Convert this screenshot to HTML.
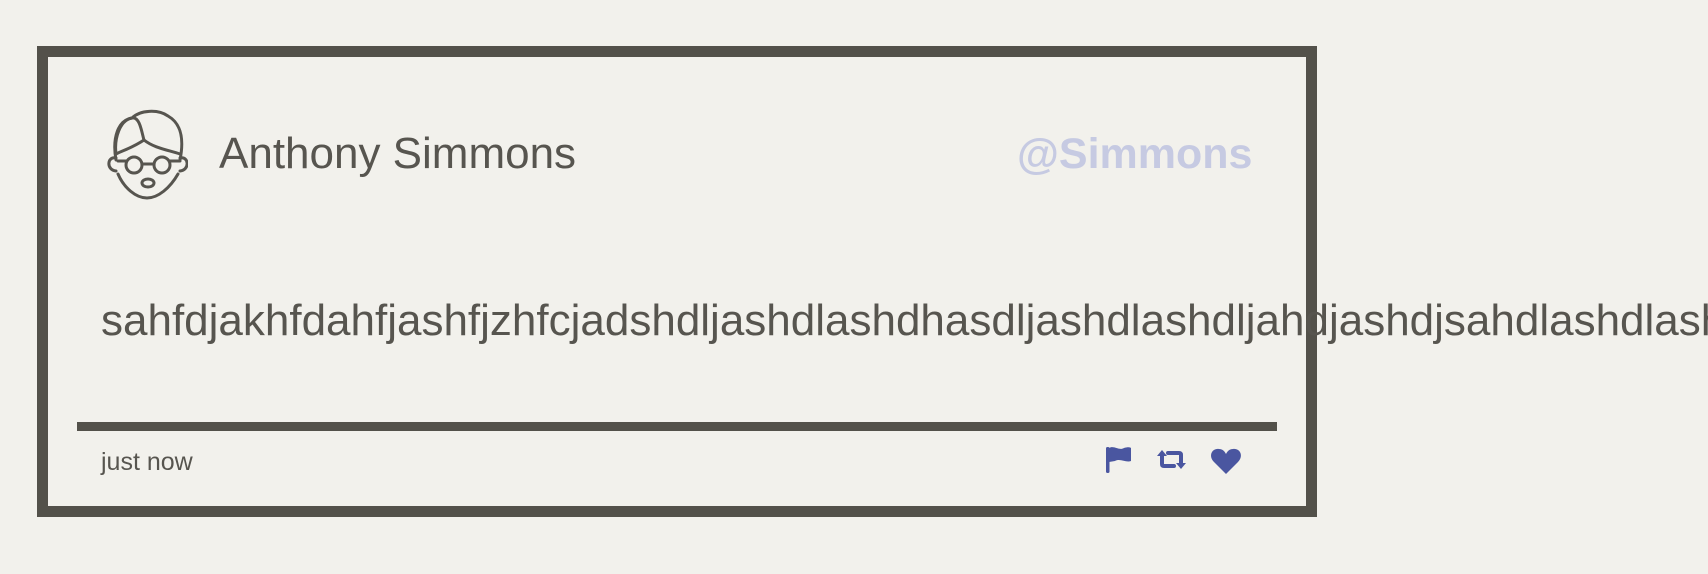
<!DOCTYPE html>
<html><head><style>
html,body{margin:0;padding:0;width:1708px;height:574px;overflow:hidden;background:#f2f1ec;font-family:"Liberation Sans",sans-serif;color:#57554f}
.box{position:absolute;left:37px;top:46px;width:1258px;height:449px;border:11px solid #53514a}
.abs{position:absolute;white-space:nowrap}
</style></head><body>
<div class="box"></div>
<svg class="abs" style="left:104px;top:108px" width="84" height="94" viewBox="0 0 84 94" fill="none" stroke="#57554f" stroke-width="3" stroke-linecap="round" stroke-linejoin="round">
<path d="M12 52 C8 30 14 12 28 10 C36 2 54 1 64 8 C78 16 80 32 76 52"/>
<path d="M28 10 C36 8 38 26 40 32 C50 40 64 42 76 46"/>
<path d="M28 10 C16 12 10 30 12 46"/>
<path d="M12 46 C20 42 28 40 40 32"/>
<path d="M12 50 C3 48 2 62 12 63"/>
<path d="M76 50 C85 48 86 62 76 63"/>
<circle cx="30" cy="57" r="8"/><circle cx="58" cy="57" r="8"/>
<path d="M38 56 L50 56 M14 53 L22 53 M66 53 L76 53"/>
<path d="M14 66 C20 80 32 90 43 90 C54 90 66 80 74 66"/>
<ellipse cx="44" cy="75" rx="6" ry="4"/>
</svg>
<div class="abs" style="left:219px;top:126px;font-size:44px;line-height:56px">Anthony Simmons</div>
<div class="abs" style="left:1017px;top:126px;font-size:43px;line-height:56px;font-weight:bold;color:#c6cae2">@Simmons</div>
<div class="abs" style="left:101px;top:293px;font-size:44px;line-height:56px">sahfdjakhfdahfjashfjzhfcjadshdljashdlashdhasdljashdlashdljahdjashdjsahdlashdlashd</div>
<div class="abs" style="left:77px;top:422px;width:1200px;height:9px;background:#53514a"></div>
<div class="abs" style="left:101px;top:447px;font-size:25px;line-height:30px">just now</div>
<svg class="abs" style="left:1104px;top:444px" width="140" height="32" viewBox="0 0 140 32" fill="#4a56a0">
<rect x="2" y="3" width="3.5" height="26" rx="1.5"/>
<path d="M5 4 C10 1 15 7 20 4 C23 3 26 3 27 4 L27 17 C22 19 16 14 11 17 L5 18 Z"/>
<path d="M58 10 L58 20 Q58 22 60 22 L70 22" fill="none" stroke="#4a56a0" stroke-width="4" stroke-linecap="round"/>
<path d="M53 12 L58 6 L63 12 Z"/>
<path d="M64 9 L75 9 Q77 9 77 11 L77 21" fill="none" stroke="#4a56a0" stroke-width="4" stroke-linecap="round"/>
<path d="M72 19 L77 25 L82 19 Z"/>
<path d="M122 30 L110 18 C104 12 108 4 115 5 C119 5 121 8 122 10 C123 8 125 5 129 5 C136 4 140 12 134 18 Z"/>
</svg>
</body></html>
